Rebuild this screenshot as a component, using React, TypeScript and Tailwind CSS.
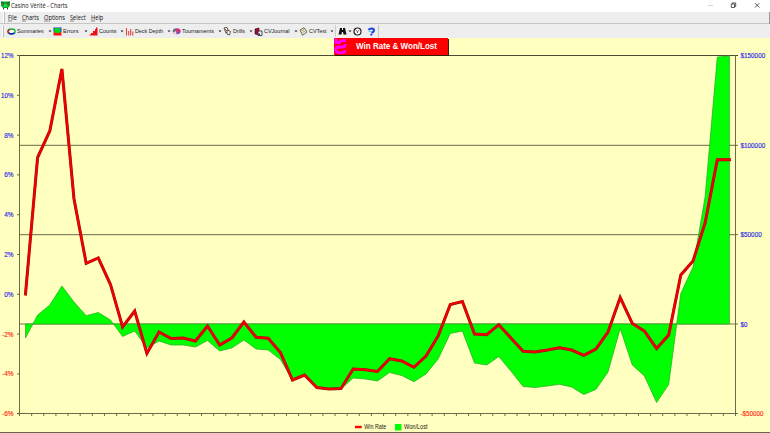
import { ReactNode } from "react";

const X0 = 25.5;
const STEP = 12.136;
const ZERO_Y = 324;

// One entry per session, in plot units
const winRate = [
  294, 157.5, 131, 69, 199, 263.3, 258, 284.5, 327, 311, 353.5, 332, 338.5, 338, 341, 326, 345, 338, 322, 337.3,
  338.3, 352.5, 380, 375, 387.5, 389, 388.5, 369, 369.7, 371.5, 358.7, 361, 367.3, 356, 336, 304.5, 301.5, 334,
  334.7, 324.7, 338, 351.3, 352, 350, 347.7, 350, 355.3, 349, 332, 297.5, 323.5, 331, 348.5, 335, 275, 261, 223,
  159.7, 159.7,
];

const wonLost = [
  338, 315, 305, 286, 302, 315.7, 312.5, 320, 336.5, 331, 348, 341, 345, 345, 347, 340.5, 351, 348, 340, 349, 350,
  359.5, 380, 375.5, 388, 389.5, 389, 378, 379, 381, 372.5, 375.5, 381.7, 374, 359, 333.5, 331, 363, 365, 356.5,
  371, 386.5, 387.5, 386, 384.3, 387, 394.5, 389.5, 372, 328.5, 365, 376, 402.5, 384.5, 293.5, 267, 197, 57, 56,
];

const leftLabels = [
  { text: "12%", width: 12.5 },
  { text: "10%", width: 12.5 },
  { text: "8%", width: 9.3 },
  { text: "6%", width: 9.3 },
  { text: "4%", width: 9.3 },
  { text: "2%", width: 9.3 },
  { text: "0%", width: 9.3 },
  { text: "-2%", width: 11.5 },
  { text: "-4%", width: 11.5 },
  { text: "-6%", width: 11.5 },
];

const rightLabels = [
  { text: "$150000", width: 24.7 },
  { text: "$100000", width: 24.7 },
  { text: "$50000", width: 21.2 },
  { text: "$0", width: 7 },
  { text: "-$50000", width: 23 },
];

const toPoints = (values: number[]) => values.map((y, i) => `${(X0 + i * STEP).toFixed(1)},${y}`).join(" ");
const labelColor = (text: string) => (text.startsWith("-") ? "#ff2a16" : "#2727e8");

function Chart() {
  const lastX = X0 + (wonLost.length - 1) * STEP;
  const area = `${X0},${ZERO_Y} ${toPoints(wonLost)} ${lastX},${ZERO_Y}`;

  return (
    <svg className="block h-[395px] w-[770px]" viewBox="0 38 770 395" fontFamily="'Liberation Sans', Arial, sans-serif">
      <g stroke="#6b6b48" strokeWidth="1">
        <path d="M17 55.5H738" stroke="#4c4c35" />
        <path d="M19 145.3H738M19 234.7H738" />
        <path d="M19 324H738" stroke="#77774f" />
        <path d="M19.5 55V416M735.5 55V416M17 413.5H738" />
        {leftLabels.map((label, i) => (
          <path key={label.text} d={`M17 ${55.5 + i * 39.8}H20`} />
        ))}
        {Array.from({ length: 60 }, (_, i) => (
          <path key={i} d={`M${19.5 + i * STEP} 413V416`} />
        ))}
      </g>
      <polygon points={area} fill="#00ff00" stroke="#20a820" strokeWidth="0.7" />
      <polyline points={toPoints(winRate)} fill="none" stroke="#9b1410" strokeWidth="3" strokeLinecap="square" />
      <polyline points={toPoints(winRate)} fill="none" stroke="#ee0000" strokeWidth="2.2" strokeLinecap="square" />

      <g fontSize="7.1" strokeWidth="0.15">
        {leftLabels.map(({ text, width }, i) => (
          <text
            key={text}
            x={13.5 - width}
            y={58 + i * 39.8}
            textLength={width}
            lengthAdjust="spacingAndGlyphs"
            fill={labelColor(text)}
            stroke={labelColor(text)}
          >
            {text}
          </text>
        ))}
        {rightLabels.map(({ text, width }, i) => (
          <text
            key={text}
            x="740.5"
            y={58 + i * 89.5}
            textLength={width}
            lengthAdjust="spacingAndGlyphs"
            fill={labelColor(text)}
            stroke={labelColor(text)}
          >
            {text}
          </text>
        ))}
      </g>

      <path d="M355 427H361.7" stroke="#ff0000" strokeWidth="2.4" />
      <rect x="395" y="424" width="6.5" height="6.5" fill="#00ff00" />
      <g fontSize="6.3" fill="#222211">
        <text x="364.3" y="429.3" textLength="22" lengthAdjust="spacingAndGlyphs">
          Win Rate
        </text>
        <text x="404" y="429.3" textLength="23.5" lengthAdjust="spacingAndGlyphs">
          Won/Lost
        </text>
      </g>
      <path d="M0 432.5H770" stroke="#66664b" />
    </svg>
  );
}

function Icon({ children }: { children: ReactNode }) {
  return (
    <svg viewBox="0 0 9 9" className="h-[9px] w-[9px] shrink-0">
      {children}
    </svg>
  );
}

const tools = [
  {
    label: "Summaries",
    item: "w-[46px]",
    text: 26.7,
    icon: (
      <g fill="none" strokeWidth="1.4">
        <ellipse cx="4.5" cy="4.5" rx="3.6" ry="2.5" fill="#fff" stroke="#17b52c" />
        <path d="M1.5 5.7Q4.5 8.2 7.5 5.7" stroke="#0b16e8" />
        <path d="M2.7 2.4Q-.5 4.5 2.2 6.2" stroke="#e01020" />
      </g>
    ),
  },
  {
    label: "Errors",
    item: "w-[36px]",
    text: 15.5,
    icon: (
      <g>
        <path d="M.5 .5H8.5V5H.5z" fill="#2b2bdc" />
        <path d="M1.5 1H7.5V6H1z" fill="#00d820" />
        <path d="M.5 5Q4 7 8.5 5V8.5H.5z" fill="#ff1010" />
      </g>
    ),
  },
  { label: "Counts", item: "w-[36px]", text: 17.5, icon: <path d="M.5 8.5V7.5H2V6H4V4H6V2H7V.5H8.5V8.5z" fill="#f01010" /> },
  {
    label: "Deck Depth",
    item: "w-[47px]",
    text: 28,
    icon: <path d="M1.5 1V8.5M3.7 4V8.5M5.7 2V8.5M7.8 4.5V8.5" stroke="#e44545" strokeWidth="1.1" />,
  },
  {
    label: "Tournaments",
    item: "w-[51px]",
    text: 32,
    icon: (
      <g>
        <ellipse cx="4.7" cy="4.3" rx="4" ry="3" fill="#c23cab" />
        <path d="M1 4L3.5 1.5L4.5 4.5z" fill="#239a56" />
        <path d="M5 1.5L8.5 3.5L5 4.5z" fill="#e23232" />
        <path d="M.5 6L4 4L4.5 7.5z" fill="#f2d5ef" />
        <path d="M5 5L8 5L6 7z" fill="#4565c4" />
      </g>
    ),
  },
  {
    label: "Drills",
    item: "w-[31px]",
    text: 12,
    icon: (
      <g fill="#fff" stroke="#382a2a" strokeWidth=".8">
        <path d="M1 1L4 .5L6 5L3 6z" />
        <path d="M4 3L7.5 4.5L6.5 8L4 7z" />
        <path d="M2 2L4 4" stroke="#b82222" />
      </g>
    ),
  },
  {
    label: "CVJournal",
    item: "w-[45px]",
    text: 25.5,
    icon: (
      <g>
        <path d="M1 2L5 1V8L1 7z" fill="#a70c2d" stroke="#300" strokeWidth=".6" />
        <path d="M4 4H8V8.5H4z" fill="#eee" stroke="#202030" strokeWidth=".8" />
        <path d="M4.5 6.5H6V8H4.5z" fill="#20208c" />
      </g>
    ),
  },
  {
    label: "CVTest",
    item: "w-[36px]",
    text: 17.5,
    icon: (
      <g>
        <path d="M1 3L5 .7L8 5L3.5 8.2z" fill="#f4efd2" stroke="#444" strokeWidth=".8" />
        <path d="M2.5 4L5 2.5M3.5 5.5L6 4" stroke="#8b833d" strokeWidth=".8" />
      </g>
    ),
  },
];

const Caret = () => (
  <svg viewBox="0 0 4 3" className="h-[3px] w-1 shrink-0">
    <path d="M.5 .5H3.5L2 2.3z" fill="#222" />
  </svg>
);

function Label({ text, width }: { text: string; width: number }) {
  return (
    <svg className="ml-px h-2 shrink-0 overflow-visible" style={{ width }}>
      <text x="0" y="6.1" fontSize="6.2" fill="#1a1a1a" textLength={width} lengthAdjust="spacingAndGlyphs">
        {text}
      </text>
    </svg>
  );
}

const menus = [
  { text: "File", width: 9 },
  { text: "Charts", width: 17 },
  { text: "Options", width: 21 },
  { text: "Select", width: 15.7 },
  { text: "Help", width: 12.3 },
];

export default function App() {
  return (
    <div className="flex h-[433px] w-[770px] flex-col overflow-hidden bg-[#ffffc0] font-['Liberation_Sans',Arial,sans-serif]">
      <header className="flex h-3 shrink-0 items-start bg-white">
        <svg viewBox="0 0 9 9" className="mt-px ml-px h-[9px] w-[9px]">
          <path d="M0 .5H9V4.5L7 7H2L0 4.5z" fill="#07a52c" />
          <path d="M2.5 3H6.5V6H2.5z" fill="#0be045" />
          <path d="M.5 1L2.5 2.5M8.5 1L6.5 2.5" stroke="#163f22" />
          <path d="M2 3.5H3.2M5.8 3.5H7" stroke="#f22" />
          <path d="M2.5 7V8.5M6.5 7V8.5" stroke="#333" />
        </svg>
        <svg className="ml-px h-3 w-[60px] overflow-visible" fontFamily="'Open Sans', 'Noto Sans', sans-serif">
          <text x="0" y="8" fontSize="6.3" fill="#1a1a1a" textLength="56.5" lengthAdjust="spacingAndGlyphs">
            Casino Vérité - Charts
          </text>
        </svg>
        <svg viewBox="0 0 60 10" className="mr-1 ml-auto h-[10px] w-[60px]" fill="none" stroke="#333" strokeWidth=".8">
          <path d="M2 5.5H7" stroke="#ccc" />
          <path d="M25.3 4H28.5V7.5H25.3zM26.3 4V2.9H29.7V6.5H28.5" />
          <path d="M49 3.2L53.3 7.5M53.3 3.2L49 7.5" />
        </svg>
      </header>

      <nav className="flex h-3 shrink-0 items-center gap-[5px] border-b border-[#c5c5c5] bg-[#eeeeee]">
        <div className="-mr-[2px] ml-[3px] h-[11px] w-[2px] border-r border-[#bcbcbc] bg-white" />
        {menus.map(({ text, width }) => (
          <svg
            key={text}
            className="h-[11px] shrink-0 overflow-visible"
            style={{ width }}
            fontFamily="'Open Sans', 'Noto Sans', sans-serif"
          >
            <text x="0" y="8" fontSize="6.4" fill="#111" textLength={width} lengthAdjust="spacingAndGlyphs">
              {text}
            </text>
            <path d="M0 9H4" stroke="#444" strokeWidth=".6" />
          </svg>
        ))}
        <div className="ml-auto h-3 w-px bg-[#999]" />
      </nav>

      <div className="flex h-[14px] shrink-0 items-center bg-[#eeeeee]">
        <div className="mr-[2.5px] ml-[2px] h-[11px] w-[2px] border-r border-[#bcbcbc] bg-white" />
        {tools.map((tool) => (
          <div key={tool.label} className={`flex shrink-0 items-center ${tool.item}`}>
            <Icon>{tool.icon}</Icon>
            <Label text={tool.label} width={tool.text} />
            <div className="mr-px ml-auto">
              <Caret />
            </div>
          </div>
        ))}
        <div className="flex h-[13px] items-center border-r border-[#c5c5c5] pr-[2px]">
          <div className="mr-[2px] h-3 w-px bg-[#ccc]" />
          <Icon>
            <path d="M2 1H4V3H5V1H7L8.5 7.5H5.5L5 5H4L3.5 7.5H.5z" fill="#111" />
          </Icon>
          <div className="mr-px ml-px">
            <Caret />
          </div>
          <Icon>
            <circle cx="4.5" cy="4.5" r="3.5" fill="#fff" stroke="#222" strokeWidth="1.2" />
            <path d="M2.5 3L4.5 4.7L6.5 3M4.5 4.7V6" fill="none" stroke="#722" strokeWidth=".8" />
          </Icon>
          <div className="ml-[5px]">
            <Icon>
              <path d="M1.5 3Q2.5 1.5 4.5 1.5Q7 1.5 7 3.2Q7 5.2 4.3 5.7" fill="none" stroke="#1548d8" strokeWidth="2" />
              <path d="M3.3 6.8H5.3V8.5H3.3z" fill="#1548d8" />
              <path d="M1.5 4.5H4" stroke="#58d0ec" />
            </Icon>
          </div>
        </div>
      </div>

      <main className="relative h-[395px] shrink-0">
        <Chart />
        <div className="absolute top-0 left-[334px] flex h-[17px] w-[114px] items-center bg-[#ff0000] shadow-[1px_1px_0_#302000]">
          <svg viewBox="0 0 14 17" className="h-[17px] w-[14px]" fill="none" stroke="#ff00ff" strokeWidth="2.8">
            <path d="M1.8 .5V4.5H5.5Q6 2.6 8 2.6H12" />
            <path d="M11 6V7.5Q11 9 9 9H5Q1.8 9 1.8 12Q1.8 14.6 5 14.6H9Q11 14.6 11 12" />
          </svg>
          <svg className="ml-2 h-[17px] w-[84px] overflow-visible">
            <text x="0" y="11" fontSize="8.4" fontWeight="bold" fill="#fff" textLength="81" lengthAdjust="spacingAndGlyphs">
              Win Rate &amp; Won/Lost
            </text>
          </svg>
        </div>
      </main>
    </div>
  );
}
